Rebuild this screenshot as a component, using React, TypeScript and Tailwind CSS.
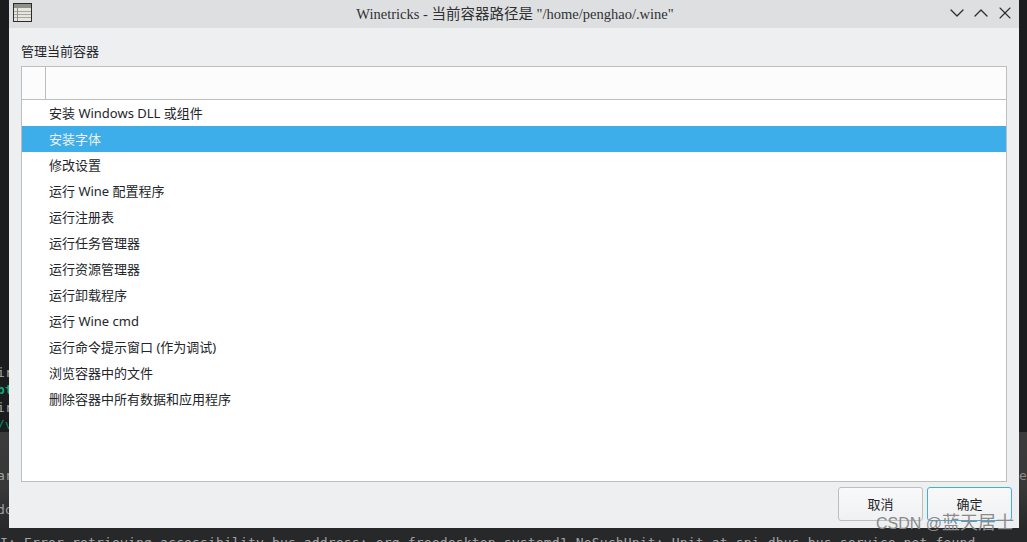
import React from 'react';
import { ChevronDown, ChevronUp, X } from 'lucide-react';

const actions = [
  '安装 Windows DLL 或组件',
  '安装字体',
  '修改设置',
  '运行 Wine 配置程序',
  '运行注册表',
  '运行任务管理器',
  '运行资源管理器',
  '运行卸载程序',
  '运行 Wine cmd',
  '运行命令提示窗口 (作为调试)',
  '浏览容器中的文件',
  '删除容器中所有数据和应用程序',
];

// Terminal text peeking out left of the dialog
const leftPeek = [
  { top: 'top-[365px]', text: 'ir', color: 'text-[#a8a8a8]' },
  { top: 'top-[382px]', text: 'bt', color: 'text-[#17a773] font-bold' },
  { top: 'top-[400px]', text: 'ir', color: 'text-[#a8a8a8]' },
  { top: 'top-[417px]', text: '/v', color: 'text-[#0f8a63]' },
  { top: 'top-[468px]', text: 'ar', color: 'text-[#a0a0a0]' },
  { top: 'top-[502px]', text: 'do', color: 'text-[#a0a0a0]' },
];

function WindowIcon() {
  return (
    <svg width="19" height="19" viewBox="0 0 19 19" className="shrink-0">
      <rect x="0.5" y="0.5" width="18" height="18" fill="#e6e6df" stroke="#2b2b2b" />
      <rect x="1" y="1" width="17" height="4" fill="#8f8f8b" />
      <path d="M1 8.5h17M1 11.5h17M1 14.5h17" stroke="#a5a59c" />
      <path d="M4.5 5v13" stroke="#8f8f8b" />
    </svg>
  );
}

export default function App() {
  return (
    <div className="relative w-[1027px] h-[542px] overflow-hidden bg-[#1a1c1d] font-['DejaVu_Sans_Mono',monospace] text-[13px]">
      {/* desktop behind the dialog */}
      <div className="absolute left-0 right-0 top-[432px] bottom-0 bg-gradient-to-b from-[#3b3b3b] via-[#383838] to-[#222425]" />
      <div className="absolute left-0 right-0 top-[528px] bottom-0 bg-[#26282a]" />
      {leftPeek.map((l) => (
        <span key={l.top + l.text} className={`absolute left-[-3px] ${l.top} ${l.color} leading-[15px] text-[13px] tracking-[0.1px]`}>
          {l.text}
        </span>
      ))}
      <span className="absolute left-[1019px] top-[468px] text-[#8a8a8a] text-[13px] leading-[15px]">e</span>
      <div className="absolute left-0 top-[535px] whitespace-nowrap text-[#a4a4a4] text-[13px] leading-[15px] tracking-[0.17px]">
        I: Error retrieving accessibility bus address: org.freedesktop.systemd1.NoSuchUnit: Unit at-spi-dbus-bus.service not found.
      </div>

      {/* dialog */}
      <div className="absolute left-[9px] top-0 w-[1010px] h-[528px] flex flex-col bg-[#eeeff1] text-[#232629] text-[13px] font-['Noto_Sans','Noto_Sans_CJK_SC',sans-serif]">
        <div className="h-[28px] shrink-0 flex items-center bg-[#dedfe1] pl-[4px] pr-[2px]">
          <div className="w-[72px] flex items-center -mt-[3px]">
            <WindowIcon />
          </div>
          <div className="flex-1 text-center pt-[1px] font-['Liberation_Serif','Noto_Sans_CJK_SC',serif] text-[14.5px] text-[#2f3133]">
            Winetricks - 当前容器路径是 "/home/penghao/.wine"
          </div>
          <div className="w-[72px] flex items-center -mt-[2px] text-[#2a2c2e]">
            <ChevronDown size={24} strokeWidth={1.3} />
            <ChevronUp size={24} strokeWidth={1.3} />
            <X size={20} strokeWidth={1.3} className="mx-[2px]" />
          </div>
        </div>

        <div className="flex-1 flex flex-col px-[12px] min-h-0">
          <div className="h-[38px] shrink-0 flex items-center pt-[8px] leading-none">管理当前容器</div>

          <div className="h-[416px] shrink-0 flex flex-col border border-[#bcbec0] bg-white">
            <div className="h-[33px] shrink-0 flex border-b border-[#bcbec0] bg-[#fcfcfc]">
              <div className="w-[24px] border-r border-[#bcbec0]" />
            </div>
            {actions.map((action, i) => (
              <div
                key={action}
                className={`h-[26px] shrink-0 flex items-center pl-[27px] pt-[2px] ${i === 1 ? 'bg-[#3daee9] text-[#eff0f1]' : ''}`}
              >
                {action}
              </div>
            ))}
          </div>

          <div className="flex justify-end gap-[4px] pt-[5px] -mr-[5px]">
            <button className="w-[85px] h-[34px] pt-[2px] rounded-[3px] border border-[#bcbec0] bg-gradient-to-b from-[#f9f9fa] to-[#f0f1f2]">
              取消
            </button>
            <button className="w-[85px] h-[34px] pt-[2px] rounded-[3px] border border-[#3daee9] bg-gradient-to-b from-[#f9f9fa] to-[#f0f1f2]">
              确定
            </button>
          </div>
        </div>
      </div>

      {/* watermark */}
      <div className="absolute left-[876px] top-[513px] whitespace-nowrap font-['Liberation_Sans','Noto_Sans_CJK_SC',sans-serif] text-[16px] leading-[20px] text-[#8a8a8a]">
        CSDN @<span className="text-[18px]">蓝天居士</span>
      </div>
    </div>
  );
}
